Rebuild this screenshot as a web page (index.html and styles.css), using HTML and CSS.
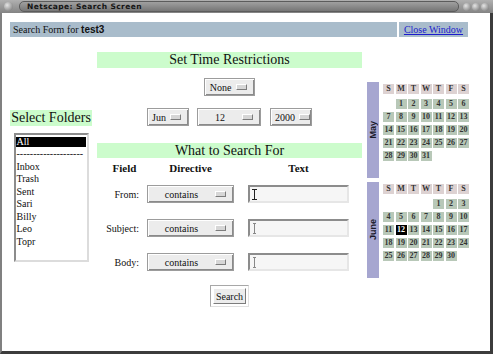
FILE: index.html
```html
<!DOCTYPE html>
<html lang="en">
<head>
    <meta charset="UTF-8">
    <title>Netscape: Search Screen</title>
    <link rel="stylesheet" href="styles.css">
</head>
<body>
    <div class="titlebar">
        <span class="tb-btn"></span>
        <div class="tb-title">Netscape: Search Screen</div>
        <span class="tb-btn small"></span>
        <span class="tb-btn small"></span>
        <span class="tb-btn small"></span>
    </div>
    <div class="frame">
        <div class="topbar">
            <div class="who">Search Form for <b>test3</b></div>
            <div class="close"><a href="#">Close Window</a></div>
        </div>

        <div class="main">
            <!-- folder list -->
            <div class="folders">
                <div class="greenbar">Select Folders</div>
                <div class="listbox">
                    <div class="item sel">All</div>
                    <div class="item">--------------------</div>
                    <div class="item">Inbox</div>
                    <div class="item">Trash</div>
                    <div class="item">Sent</div>
                    <div class="item">Sari</div>
                    <div class="item">Billy</div>
                    <div class="item">Leo</div>
                    <div class="item">Topr</div>
                </div>
            </div>

            <!-- search form -->
            <div class="search">
                <div class="greenbar">Set Time Restrictions</div>
                <div class="optrow first">
                    <div class="opt w-none"><span class="lbl">None</span><i class="ind"></i></div>
                </div>
                <div class="optrow dates">
                    <div class="opt w-month"><span class="lbl">Jun</span><i class="ind"></i></div>
                    <div class="opt w-day"><span class="lbl">12</span><i class="ind"></i></div>
                    <div class="opt w-year"><span class="lbl">2000</span><i class="ind"></i></div>
                </div>
                <div class="greenbar second">What to Search For</div>
                <div class="fields">
                    <div class="th field">Field</div>
                    <div class="th">Directive</div>
                    <div class="th text">Text</div>

                    <div class="label">From:</div>
                    <div class="opt"><span class="lbl">contains</span><i class="ind"></i></div>
                    <div class="textbox"><svg class="ibeam" width="5" height="11" viewBox="0 0 5 11"><path d="M0 .5H5M2.5 .5V10.5M0 10.5H5" stroke="#222" fill="none"/></svg></div>

                    <div class="label">Subject:</div>
                    <div class="opt"><span class="lbl">contains</span><i class="ind"></i></div>
                    <div class="textbox"><svg class="ibeam" width="5" height="11" viewBox="0 0 5 11"><path d="M1 .5H4M2.5 .5V10.5M1 10.5H4" stroke="#888" fill="none"/></svg></div>

                    <div class="label">Body:</div>
                    <div class="opt"><span class="lbl">contains</span><i class="ind"></i></div>
                    <div class="textbox"><svg class="ibeam" width="5" height="11" viewBox="0 0 5 11"><path d="M1 .5H4M2.5 .5V10.5M1 10.5H4" stroke="#888" fill="none"/></svg></div>
                </div>
                <div class="btnrow">
                    <div class="btnframe"><button class="btn">Search</button></div>
                </div>
            </div>

            <!-- calendars -->
            <div class="calendar">
                <div class="month">
                    <div class="mname"><span>May</span></div>
                    <div class="days">
                        <span class="h">S</span><span class="h">M</span><span class="h">T</span><span class="h">W</span><span class="h">T</span><span class="h">F</span><span class="h">S</span>
                        <span class="e"></span><span>1</span><span>2</span><span>3</span><span>4</span><span>5</span><span>6</span>
                        <span>7</span><span>8</span><span>9</span><span>10</span><span>11</span><span>12</span><span>13</span>
                        <span>14</span><span>15</span><span>16</span><span>17</span><span>18</span><span>19</span><span>20</span>
                        <span>21</span><span>22</span><span>23</span><span>24</span><span>25</span><span>26</span><span>27</span>
                        <span>28</span><span>29</span><span>30</span><span>31</span>
                    </div>
                </div>
                <div class="month">
                    <div class="mname"><span>June</span></div>
                    <div class="days">
                        <span class="h">S</span><span class="h">M</span><span class="h">T</span><span class="h">W</span><span class="h">T</span><span class="h">F</span><span class="h">S</span>
                        <span class="e"></span><span class="e"></span><span class="e"></span><span class="e"></span><span>1</span><span>2</span><span>3</span>
                        <span>4</span><span>5</span><span>6</span><span>7</span><span>8</span><span>9</span><span>10</span>
                        <span>11</span><span class="today">12</span><span>13</span><span>14</span><span>15</span><span>16</span><span>17</span>
                        <span>18</span><span>19</span><span>20</span><span>21</span><span>22</span><span>23</span><span>24</span>
                        <span>25</span><span>26</span><span>27</span><span>28</span><span>29</span><span>30</span>
                    </div>
                </div>
            </div>
        </div>
    </div>
</body>
</html>
```

FILE: styles.css
```css
body {
    margin: 0;
    font-family: "Liberation Serif", serif;
    background: #fff;
    color: #111;
}

/* window title bar */
.titlebar {
    height: 13px;
    display: flex;
    align-items: center;
    gap: 1px;
    padding: 0 4px 0 4px;
    background: linear-gradient(#b0b0b0, #848484);
}
.tb-btn {
    flex: none;
    width: 9px;
    height: 9px;
    border-radius: 50%;
    background: radial-gradient(circle at 35% 35%, #e4e4e4, #6c6c6c);
}
.tb-btn.small {
    width: 8px;
    height: 8px;
}
.tb-title {
    flex: 1;
    height: 9px;
    margin: 0 3px 0 5px;
    padding-left: 7px;
    border: 1px solid #5c5c5c;
    border-radius: 5px;
    background: linear-gradient(#a0a0a0, #767676);
    font: bold 7.5px/9px "DejaVu Sans", sans-serif;
    letter-spacing: 0.4px;
    color: #141414;
}

.frame {
    height: 341px;
    box-sizing: border-box;
    border-left: 2px solid #808080;
    border-right: 3px solid #3c3c3c;
    border-bottom: 3px solid #3c3c3c;
    padding: 9px 8px 0 8px;
}

/* header row */
.topbar {
    display: flex;
    gap: 2px;
    width: 458px;
    height: 15px;
    font-size: 10px;
    line-height: 15px;
}
.who {
    flex: 1;
    padding-left: 3px;
    background: #a9bccb;
}
.who b {
    font-family: "Liberation Sans", sans-serif;
}
.close {
    width: 69px;
    text-align: center;
    background: #a9bccb;
}
.close a {
    color: #1c1ccc;
}

.main {
    display: flex;
    align-items: center;
    gap: 5px;
    margin-top: 15px;
}

.greenbar {
    height: 16px;
    background: #ccfccc;
    font-size: 14px;
    line-height: 16px;
    text-align: center;
}

/* folders */
.folders {
    width: 82px;
    padding-top: 12px;
}
.listbox {
    width: 75px;
    height: 129px;
    box-sizing: border-box;
    margin: 7px auto 0;
    padding: 1px 1px 0 0;
    border: 2px solid;
    border-color: #8c8c8c #dcdcdc #dcdcdc #8c8c8c;
    background: #fff;
    font-size: 10px;
    line-height: 12.5px;
    overflow: hidden;
}
.item {
    padding-left: 1px;
    white-space: nowrap;
}
.item.sel {
    height: 10px;
    line-height: 10px;
    margin: 1px 0 1.5px;
    background: #000;
    color: #fff;
}

/* search form */
.search {
    width: 265px;
}
.greenbar.second {
    height: 15px;
    line-height: 15px;
    margin-top: 17px;
}
.optrow {
    display: flex;
    justify-content: center;
    margin-top: 10px;
}
.optrow.dates {
    gap: 8px;
    margin-top: 12px;
}
.opt {
    display: flex;
    align-items: center;
    height: 18px;
    box-sizing: border-box;
    padding: 0 7px 0 4px;
    border: 1px solid #9c9c9c;
    box-shadow: inset 1px 1px #fff, inset -1px -1px #8a8a8a;
    background: #ececec;
    font-size: 10px;
}
.opt .lbl {
    flex: 1;
    text-align: center;
}
.ind {
    flex: none;
    width: 9px;
    height: 4px;
    margin-left: 4px;
    border: 1px solid;
    border-color: #fff #7c7c7c #7c7c7c #fff;
    background: #d6d6d6;
}
.w-none { width: 51px; }
.w-month { width: 42px; }
.w-day { width: 64px; margin-right: 1px; }
.w-year { width: 42px; }

.fields {
    display: grid;
    grid-template-columns: 50px 87px 115px;
    grid-template-rows: 9px repeat(3, 18px);
    row-gap: 16px;
    margin-top: 2px;
    font-size: 10px;
}
.fields .th {
    align-self: start;
    height: 16px;
    font-weight: bold;
    font-size: 11px;
    line-height: 16px;
    text-align: center;
}
.th.field {
    padding-left: 5px;
}
.th.text {
    padding-left: 14px;
}
.label {
    align-self: center;
    padding-right: 8px;
    text-align: right;
}
.textbox {
    display: flex;
    align-items: center;
    margin-left: 14px;
    padding-left: 2px;
    box-sizing: border-box;
    border: 2px solid;
    border-color: #8c8c8c #e6e6e6 #e6e6e6 #8c8c8c;
    background: #f6f6f6;
}

.btnrow {
    display: flex;
    justify-content: center;
    margin-top: 14px;
}
.btnframe {
    padding: 2px;
    border: 1px solid;
    border-color: #a8a8a8 #e0e0e0 #e0e0e0 #a8a8a8;
}
.btn {
    display: block;
    height: 16px;
    padding: 0 2px;
    border: 1px solid;
    border-color: #fff #7c7c7c #7c7c7c #fff;
    background: #ececec;
    font-family: "Liberation Serif", serif;
    font-size: 10px;
    color: #111;
}

/* calendars */
.calendar {
    width: 102px;
    display: flex;
    flex-direction: column;
    gap: 4px;
}
.month {
    display: flex;
    gap: 4px;
    height: 96px;
}
.mname {
    width: 12px;
    display: flex;
    align-items: center;
    justify-content: center;
    background: #a6a6d0;
}
.mname span {
    writing-mode: vertical-rl;
    transform: rotate(180deg);
    font: bold 9px "Liberation Sans", sans-serif;
    color: #1a1a2a;
}
.days {
    display: grid;
    grid-template-columns: repeat(7, 11px);
    grid-template-rows: 12px repeat(6, 10px);
    column-gap: 1.5px;
    row-gap: 3px;
    padding-top: 2px;
    font: bold 8px/10px "Liberation Serif", serif;
    color: #333;
}
.days span {
    height: 10px;
    text-align: center;
    background: #b8c8b8;
}
.days .h {
    background: #ddd2d2;
}
.days .e {
    background: none;
}
.days .today {
    background: #000;
    color: #fff;
}
```
